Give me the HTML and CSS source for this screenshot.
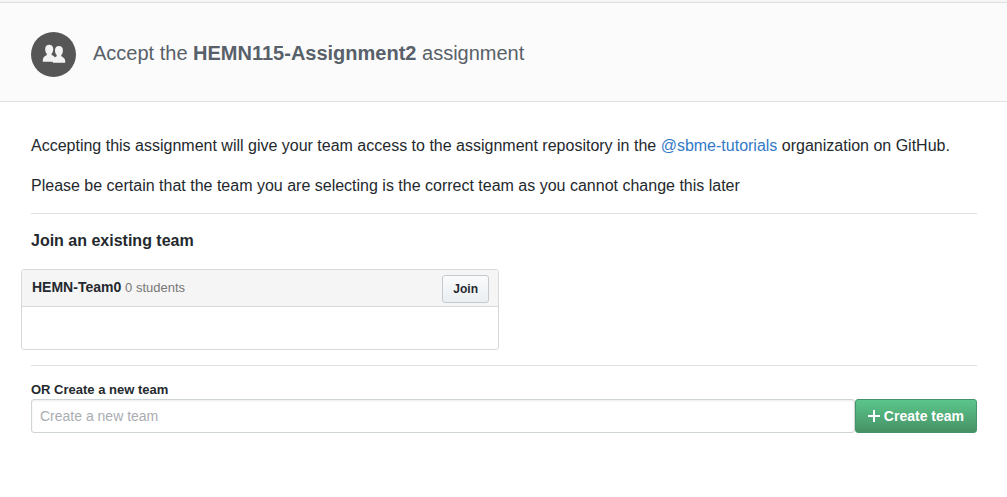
FILE: index.html
```html
<!DOCTYPE html>
<html lang="en">
<head>
<meta charset="utf-8">
<title>Accept the HEMN115-Assignment2 assignment</title>
<link rel="stylesheet" href="styles.css">
</head>
<body>
<header class="site-header">
  <svg class="avatar" viewBox="0 0 45 45" aria-hidden="true">
    <circle class="avatar-disc" cx="22.5" cy="22.5" r="22.5"/>
    <path class="avatar-person" d="M18.2 12.8C21 12.8 22.2 14.6 22.2 17.2C22.2 19.4 21.4 21 20.6 21.8V23C22 23.6 24.2 24.4 24.2 27V29.8H11.8V28.4C11.8 25.2 14.2 24 15.8 23V21.8C14.8 21 14.2 19.4 14.2 17.2C14.2 14.6 15.4 12.8 18.2 12.8Z"/>
    <path class="avatar-person" d="M28 14C30.8 14 31.9 15.8 31.9 18.4C31.9 20.6 31.2 22.2 30.3 23V24.2C32 25.2 34.2 26 34.2 29V30.8H21.8V29C21.8 26 24.2 25.2 25.7 24.2V23C24.8 22.2 24 20.6 24 18.4C24 15.8 25.2 14 28 14Z"/>
  </svg>
  <h1 class="page-title">Accept the <strong>HEMN115-Assignment2</strong> assignment</h1>
</header>
<main class="content">
  <div class="intro">
    <p class="lead">Accepting this assignment will give your team access to the assignment repository in the <a class="link" href="#">@sbme-tutorials</a> organization on GitHub.</p>
    <p class="lead">Please be certain that the team you are selecting is the correct team as you cannot change this later</p>
  </div>
  <section class="section">
    <h2 class="section-title">Join an existing team</h2>
    <div class="team">
      <div class="team-header">
        <h3 class="team-name">HEMN-Team0 <small class="team-count">0 students</small></h3>
        <button class="btn btn-small" type="button">Join</button>
      </div>
      <div class="team-members"></div>
    </div>
  </section>
  <form class="section">
    <label class="label" for="team-title">OR Create a new team</label>
    <div class="create-row">
      <input class="input" id="team-title" type="text" placeholder="Create a new team">
      <button class="btn btn-primary" type="button">
        <svg class="plus" viewBox="0 0 12 12" aria-hidden="true"><path d="M5 0h2v5h5v2H7v5H5V7H0V5h5z"/></svg>
        Create team
      </button>
    </div>
  </form>
</main>
</body>
</html>
```
FILE: styles.css
```css
* {
  box-sizing: border-box;
}

body {
  margin: 0;
  background: #fff;
  color: #24292e;
  font-family: "Liberation Sans", Arial, sans-serif;
  font-size: 16px;
  line-height: 24px;
}

.site-header {
  display: flex;
  align-items: center;
  gap: 17px;
  padding: 32px 30px 24px 31px;
  border-bottom: 1px solid #e1e1e1;
  background: #fbfbfb;
  box-shadow: inset 0 2px #f5f5f5, inset 0 3px #dfdfdf;
}

.avatar {
  width: 45px;
  height: 45px;
}

.avatar-disc {
  fill: #565656;
}

.avatar-person {
  fill: #f3f3f3;
}

.page-title {
  margin: 0;
  padding-bottom: 4px;
  color: #586069;
  font-size: 20px;
  font-weight: 400;
  line-height: 24px;
}

.content {
  padding: 32px 30px 32px 31px;
}

.intro {
  display: grid;
  gap: 16px;
  margin-bottom: 15px;
}

.lead {
  margin: 0;
}

.link {
  color: #337ac7;
  text-decoration: none;
}

.section {
  padding: 14px 0 15px;
  border-top: 1px solid #e1e1e1;
}

.section-title {
  margin: 0 0 16px;
  padding-top: 1px;
  font-size: 16px;
  line-height: 24px;
}

.team {
  width: calc(50% + 5px);
  margin-left: -10px;
  border: 1px solid #d8d8d8;
  border-radius: 3px;
}

.team-header {
  display: flex;
  justify-content: space-between;
  align-items: center;
  padding: 5px 9px 3px 10px;
  border-bottom: 1px solid #d8d8d8;
  background: #f5f5f5;
}

.team-name {
  margin: 0;
  padding-bottom: 3px;
  font-size: 14px;
  line-height: 20px;
}

.team-count {
  color: #777;
  font-size: 13px;
  font-weight: 400;
}

.team-members {
  height: 42px;
}

.btn {
  border: 1px solid #c5cacf;
  border-radius: 3px;
  font-family: inherit;
  font-weight: 700;
  cursor: pointer;
}

.btn-small {
  height: 28px;
  padding: 0 10px;
  background: linear-gradient(#fafbfc, #eaeff3);
  color: #24292e;
  font-size: 12px;
}

.label {
  display: block;
  font-size: 13px;
  font-weight: 700;
  line-height: 19px;
}

.create-row {
  display: flex;
}

.input {
  flex: 1;
  min-width: 0;
  height: 34px;
  padding: 0 8px;
  border: 1px solid #cfd4d7;
  border-radius: 3px;
  background: #fff;
  box-shadow: inset 0 1px 2px rgba(27, 31, 35, 0.075);
  color: #24292e;
  font-family: inherit;
  font-size: 14px;
}

.input::placeholder {
  color: #a9adb1;
}

.btn-primary {
  display: flex;
  align-items: center;
  gap: 4px;
  height: 34px;
  padding: 0 12px;
  border-color: #45936a;
  background: linear-gradient(#5bc58c, #469264);
  color: #fff;
  font-size: 14px;
}

.plus {
  width: 12px;
  height: 12px;
  fill: #fff;
}
```
